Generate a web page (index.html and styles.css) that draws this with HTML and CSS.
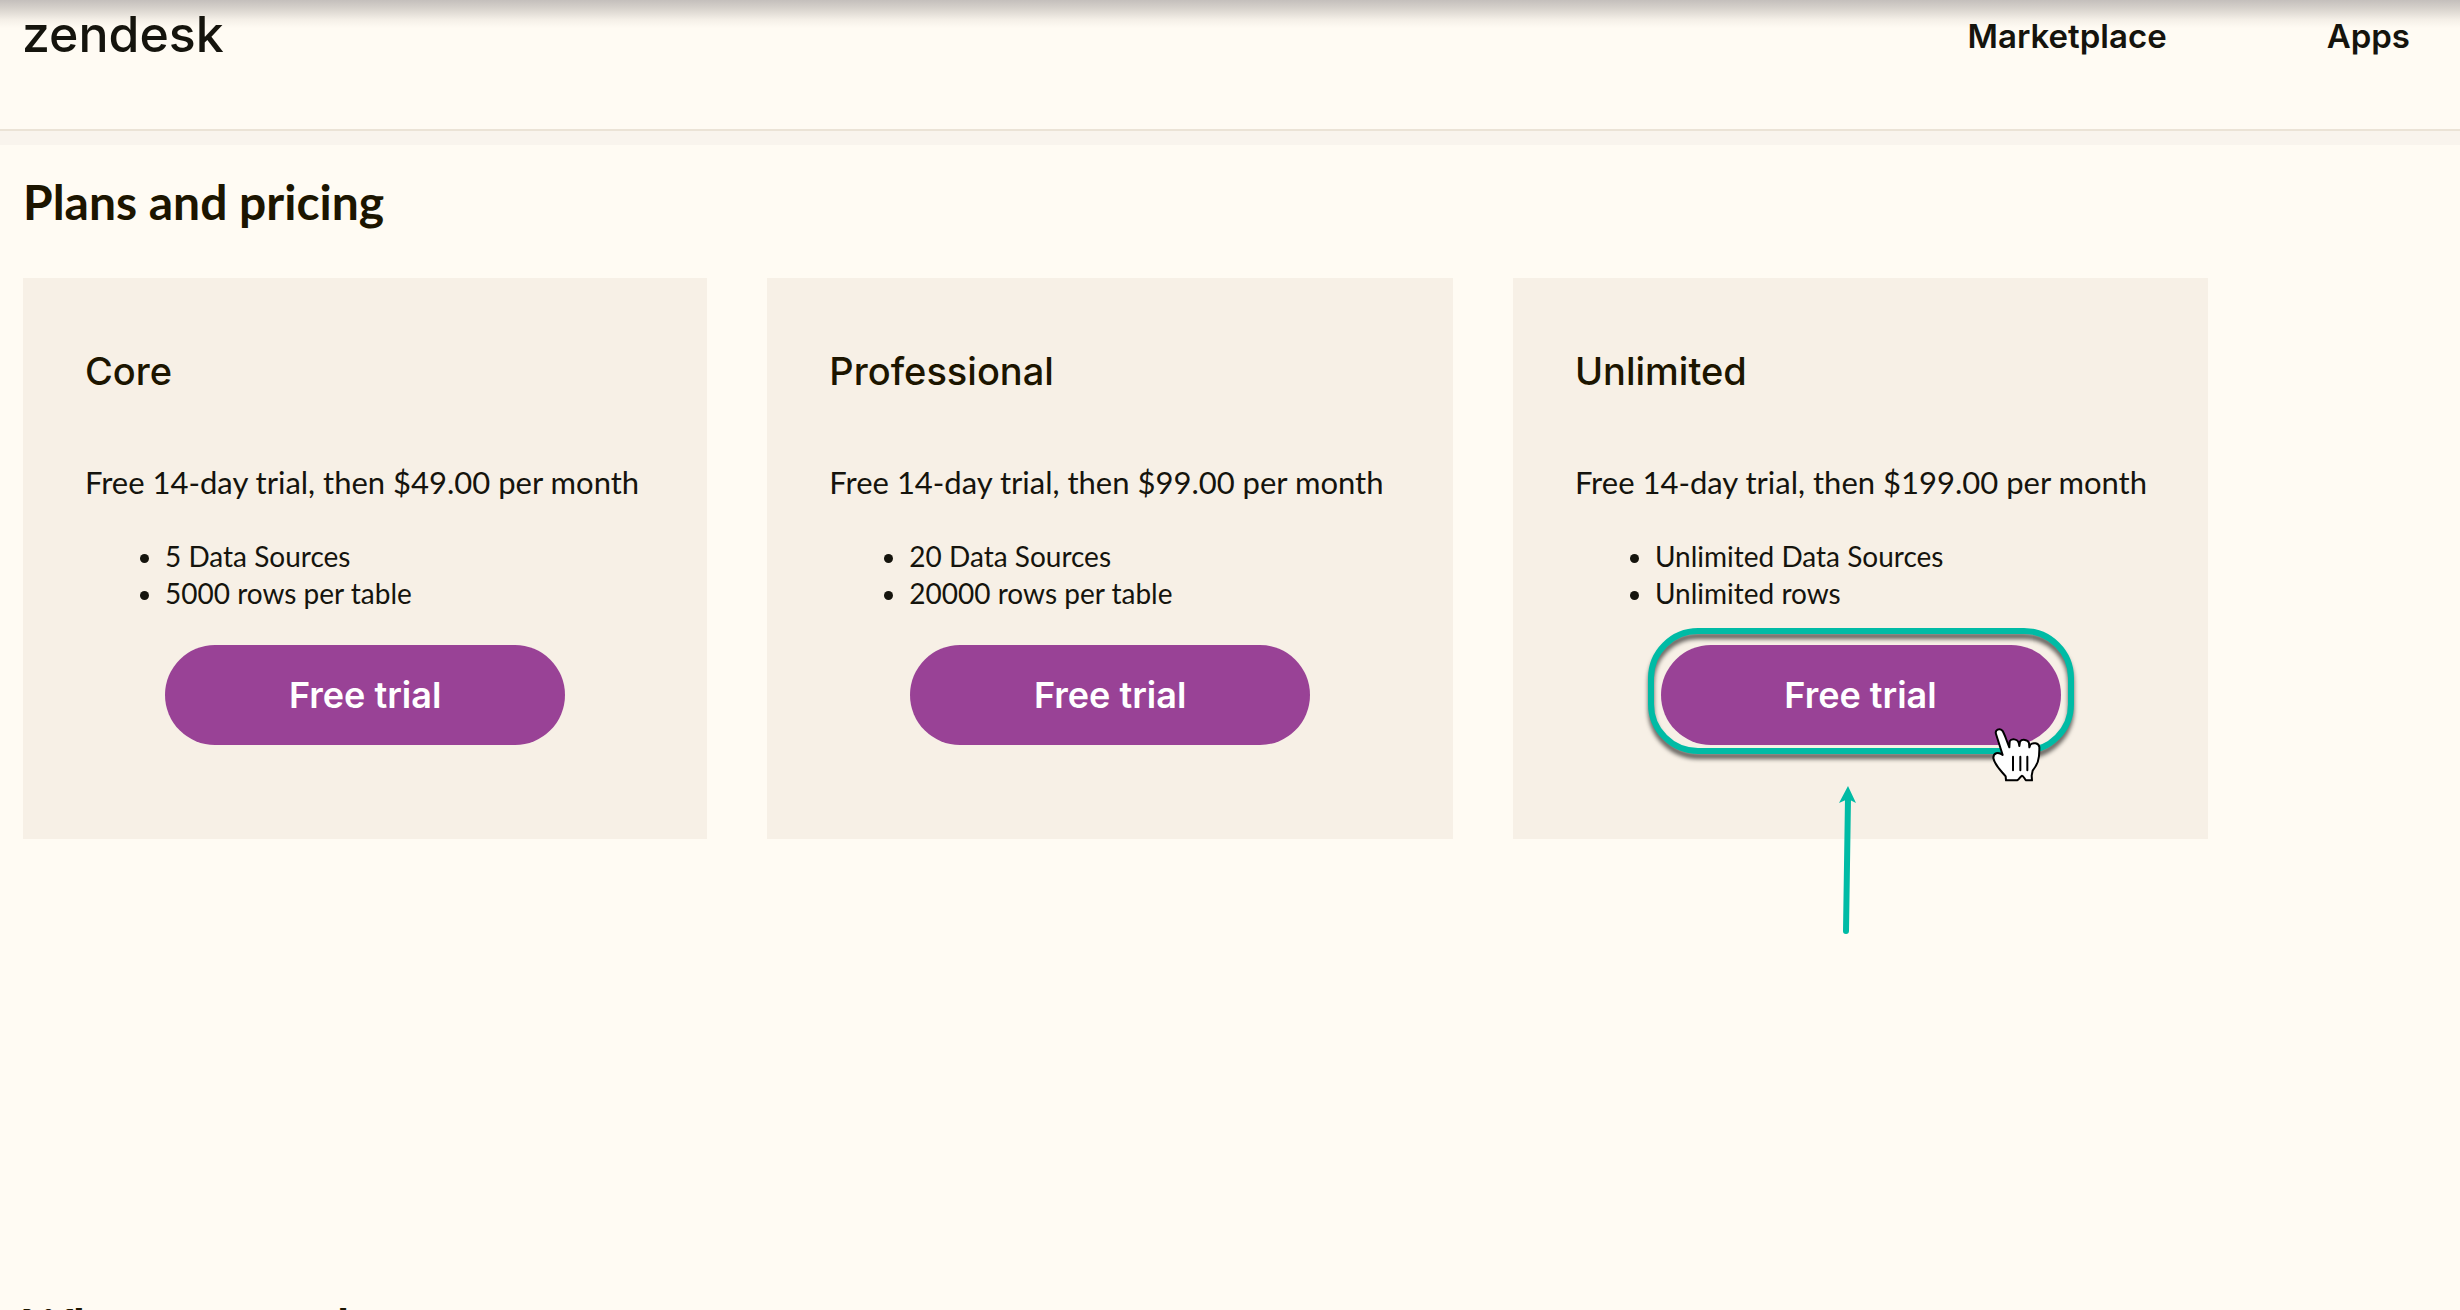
FILE: index.html
```
<!DOCTYPE html>
<html lang="en">
<head>
  <meta charset="UTF-8">
  <meta name="viewport" content="width=device-width, initial-scale=1.0">
  <title>Plans and pricing - Zendesk Marketplace</title>
  <link rel="stylesheet" href="styles.css">
</head>
<body>
  <header class="header">
    <a class="logo" href="#">zendesk</a>
    <nav class="nav">
      <a href="#">Marketplace</a>
      <a href="#">Apps</a>
    </nav>
  </header>
  <div class="band"></div>

  <main>
    <section class="pricing">
      <h2>Plans and pricing</h2>
      <div class="plans">
        <article class="plan">
          <h3>Core</h3>
          <p class="price">Free 14-day trial, then $49.00 per month</p>
          <ul>
            <li>5 Data Sources</li>
            <li>5000 rows per table</li>
          </ul>
          <div class="action">
            <button class="button" type="button">Free trial</button>
          </div>
        </article>

        <article class="plan">
          <h3>Professional</h3>
          <p class="price">Free 14-day trial, then $99.00 per month</p>
          <ul>
            <li>20 Data Sources</li>
            <li>20000 rows per table</li>
          </ul>
          <div class="action">
            <button class="button" type="button">Free trial</button>
          </div>
        </article>

        <article class="plan">
          <h3>Unlimited</h3>
          <p class="price">Free 14-day trial, then $199.00 per month</p>
          <ul>
            <li>Unlimited Data Sources</li>
            <li>Unlimited rows</li>
          </ul>
          <div class="action">
            <button class="button" type="button">Free trial</button>
            <!-- Callout around the button -->
            <span class="highlight"></span>
            <svg class="arrow" viewBox="0 0 20 150" aria-hidden="true">
              <path d="M10 12 L8 145" fill="none" stroke="#00bba5" stroke-width="6" stroke-linecap="round"/>
              <path d="M10 0 L18 17 L10 13 L1 17 Z" fill="#00bba5"/>
            </svg>
            <svg class="pointer" viewBox="96 84 147 162" aria-hidden="true">
              <path d="M108 102 C104 89 119 83 127 92 C134 101 140 124 148 142 L149 124 C154 115 172 116 176 128 L178 138 L180 125 C186 116 204 119 207 129 L208 142 L211 134 C219 126 236 129 238 141 C239 180 232 194 218 212 L215 227 L216 241 L198 241 C194 237 190 227 186 227 C182 228 178 237 171 241 L138 241 L137 229 C126 215 105 198 100 174 C100 159 114 154 128 165 Z" fill="#fff" stroke="#000" stroke-width="6" stroke-linejoin="round"/>
              <path d="M159 170 V211 M181 170 V211 M202 170 V211" fill="none" stroke="#000" stroke-width="6" stroke-linecap="round"/>
            </svg>
          </div>
        </article>
      </div>
    </section>

    <section class="details">
      <h2>What you need</h2>
    </section>
  </main>
</body>
</html>
```
FILE: styles.css
```
* {
  box-sizing: border-box;
}
body {
  margin: 0;
  background-color: #fffbf3;
  color: #15140d;
  font-family: Lato, 'Helvetica', 'Arial', sans-serif;
}
h2, h3, p, ul {
  margin: 0;
}
.header {
  display: flex;
  justify-content: space-between;
  align-items: flex-start;
  padding: 0 50px 0 22px;
  height: 131px;
  border-bottom: 2px solid #ebe3d6;
  background-image: linear-gradient(#c4bfbc, #d6d1cb 8px, #f5f0e8 20px, #fffbf3 28px);
}
.logo {
  color: #15140d;
  font-family: Inter, sans-serif;
  font-size: 50px;
  font-weight: 500;
  line-height: 68px;
  text-decoration: none;
}
.nav {
  display: flex;
  gap: 160px;
  font-family: Inter, sans-serif;
  font-size: 33px;
  font-weight: 600;
  line-height: 72px;
}
.nav a {
  color: #15140d;
  text-decoration: none;
}
.band {
  height: 14px;
  background-color: #f9f4ed;
}
.pricing, .details {
  padding: 28px 23px 0;
}
h2 {
  color: #1c1500;
  font-size: 48px;
  font-weight: 700;
  line-height: 58px;
}
.plans {
  display: grid;
  grid-template-columns: 28.35% 28.4% 28.8%;
  gap: 60px;
  margin-top: 47px;
}
.plan {
  padding: 69px 62px 94px;
  background-color: #f7f0e6;
}
h3 {
  color: #1c1500;
  font-family: Inter, sans-serif;
  font-size: 38px;
  font-weight: 500;
  line-height: 48px;
}
.price {
  margin-top: 69px;
  font-size: 31px;
  line-height: 36px;
  white-space: nowrap;
}
.plan ul {
  margin-top: 38px;
  padding-left: 80px;
  font-size: 28px;
  line-height: 37px;
}
.action {
  position: relative;
  width: 400px;
  margin: 33px auto 0;
}
.button {
  display: block;
  width: 100%;
  height: 100px;
  border: none;
  border-radius: 50px;
  background-color: #994296;
  color: #fff;
  font-family: Inter, sans-serif;
  font-size: 36px;
  font-weight: 600;
  cursor: pointer;
}
.highlight {
  position: absolute;
  top: -17px;
  right: -13px;
  bottom: -9px;
  left: -13px;
  border: 6px solid #00bba5;
  border-radius: 50px;
  filter: drop-shadow(0 5px 2px rgba(0, 0, 0, 0.6));
  pointer-events: none;
}
.arrow {
  position: absolute;
  top: 141px;
  left: 177px;
  width: 20px;
  height: 150px;
}
.pointer {
  position: absolute;
  top: 83px;
  left: 331px;
  width: 49px;
  height: 54px;
}
.details {
  margin-top: 430px;
}
```
